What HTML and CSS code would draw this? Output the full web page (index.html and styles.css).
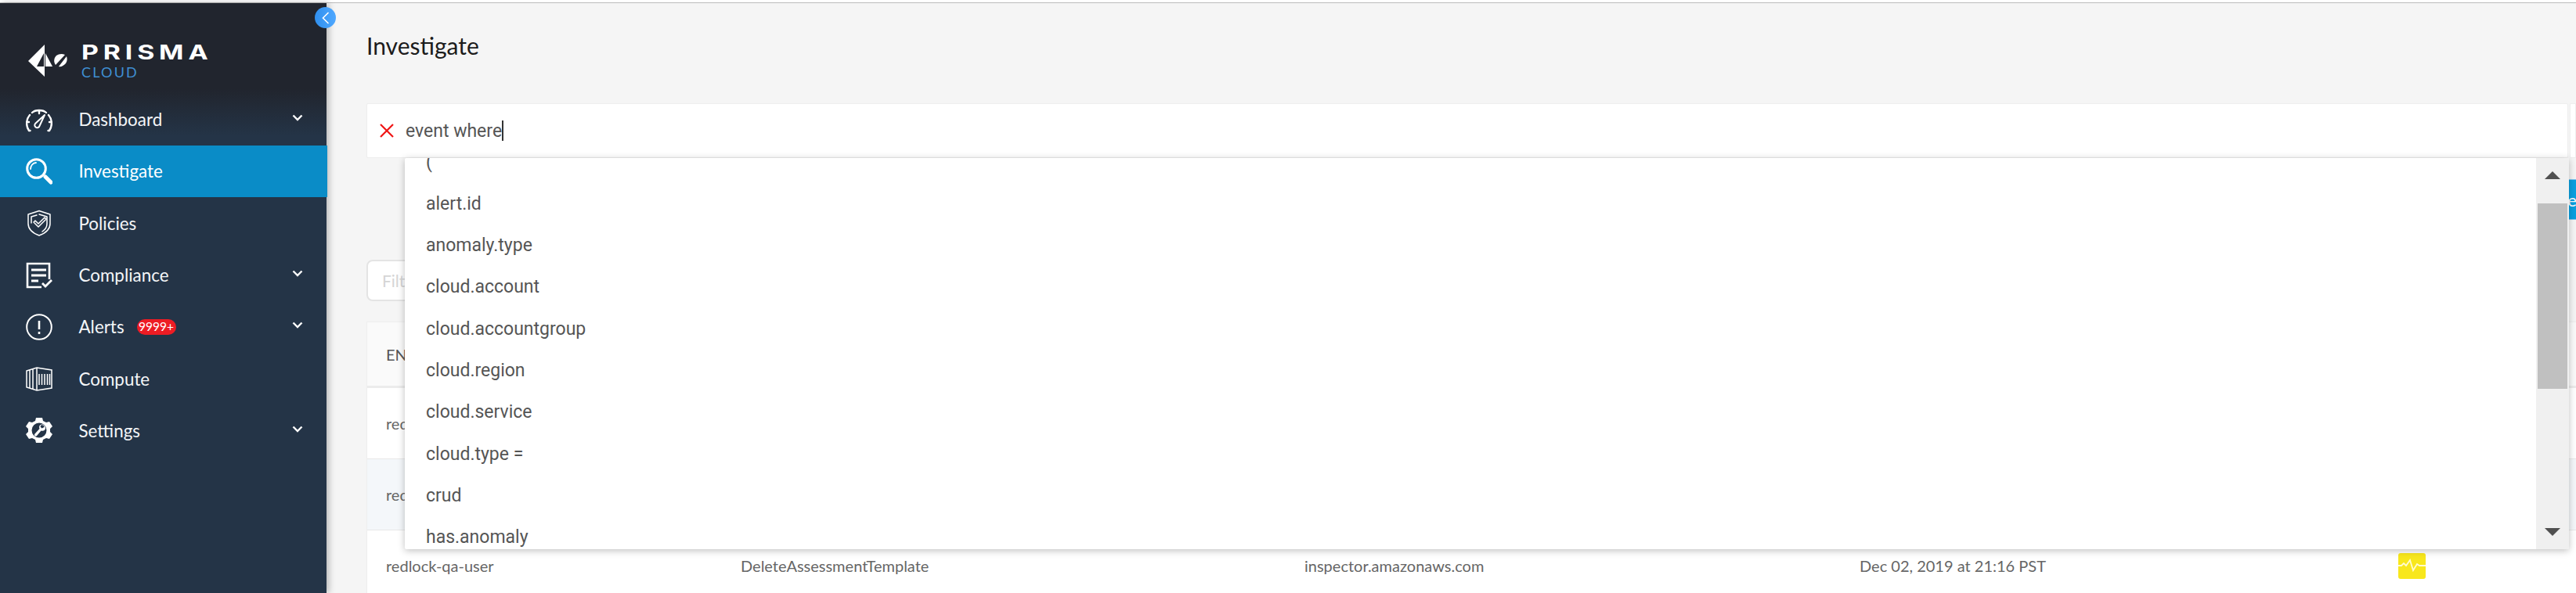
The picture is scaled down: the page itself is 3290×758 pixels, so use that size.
FILE: index.html
```html
<!DOCTYPE html>
<html lang="en">
<head>
    <meta charset="UTF-8">
    <title>Prisma Cloud - Investigate</title>
    <link rel="stylesheet" href="styles.css">
</head>
<body>
    <div class="app">
        <aside class="sidebar">
            <button class="collapse" type="button">
                <svg width="10" height="16" viewBox="0 0 10 16"><path d="M8.5 1 1.5 8l7 7" fill="none" stroke="#fff" stroke-width="1.6"/></svg>
            </button>
            <div class="logo">
                <svg class="logo-mark" width="54" height="46" viewBox="0 0 54 46">
                    <path fill="#fff" fill-rule="evenodd" d="M22 0 1 21l21 20ZM21 11 12 28h9Z"/>
                    <path fill="#fff" d="M23 11v17h9Z"/>
                    <path fill="#fff" d="M36 26c-3-4-2-9 1-12 3-2 7-3 11-1Z"/>
                    <path fill="#fff" d="M50 15c1 3 1 6-1 9-3 3-6 5-9 4Z"/>
                </svg>
                <div class="logo-text">
                    <div class="logo-name">PRISMA</div>
                    <div class="logo-sub">CLOUD</div>
                </div>
            </div>
            <nav class="nav">
                <a class="nav-item">
                    <svg class="nav-icon" width="34" height="34" viewBox="0 0 34 34" fill="none" stroke="#fff" stroke-width="2.4" stroke-linecap="round">
                        <path d="M4 31C0 25 0 17 5 11M8 8c2-2 5-3 9-3s7 1 9 3M29 11c5 6 5 14 1 20M17 5v4M4 20H1M33 20h-3M4 31h1.500M30 31h-1.500"/>
                        <path d="M24 11 12 22a3 3 0 0 0 5 4Z" stroke-width="2" stroke-linejoin="round"/>
                    </svg>
                    <span class="nav-label">Dashboard</span>
                    <svg class="chevron" width="14" height="9" viewBox="0 0 14 9"><path d="m1.5 1.5 5.5 5.5 5.5-5.5" fill="none" stroke="#fff" stroke-width="2.4"/></svg>
                </a>
                <a class="nav-item active">
                    <svg class="nav-icon" width="34" height="34" viewBox="0 0 34 34" fill="none" stroke="#fff" stroke-linecap="round">
                        <circle cx="13.500" cy="13.500" r="11.800" stroke-width="3"/>
                        <path d="M6 14c0-4 3-8 7-8" stroke-width="1.800"/>
                        <path d="m25 24 7 7" stroke-width="5"/>
                    </svg>
                    <span class="nav-label">Investigate</span>
                </a>
                <a class="nav-item">
                    <svg class="nav-icon" width="34" height="34" viewBox="0 0 34 34" fill="none" stroke="#fff" stroke-width="1.500" stroke-linecap="round" stroke-linejoin="round">
                        <path d="M17 1.500 31 6v12c0 7-6 12-14 15C9 30 3 25 3 18V6Z"/>
                        <path d="M17 6 27 9v9c0 5-3 8-6 10M7 17V9l7-2"/>
                        <path d="m10 16 6 6 10-10-2-2-8 8-4-4Z"/>
                    </svg>
                    <span class="nav-label">Policies</span>
                </a>
                <a class="nav-item">
                    <svg class="nav-icon" width="34" height="34" viewBox="0 0 34 34" fill="none" stroke="#fff" stroke-width="2.600">
                        <path d="M20 32H2V2h28v20"/>
                        <path d="M7 10h19M7 17h19M7 24h9" stroke-width="3"/>
                        <path d="m21 27 4 4 8-8" stroke-width="2.800"/>
                    </svg>
                    <span class="nav-label">Compliance</span>
                    <svg class="chevron" width="14" height="9" viewBox="0 0 14 9"><path d="m1.5 1.5 5.5 5.5 5.5-5.5" fill="none" stroke="#fff" stroke-width="2.4"/></svg>
                </a>
                <a class="nav-item">
                    <svg class="nav-icon" width="34" height="34" viewBox="0 0 34 34" fill="none" stroke="#fff" stroke-width="2">
                        <circle cx="17" cy="17" r="15.800"/>
                        <path d="M17 9v11M17 23v3" stroke-width="2.600"/>
                    </svg>
                    <span class="nav-label">Alerts</span>
                    <span class="badge">9999+</span>
                    <svg class="chevron" width="14" height="9" viewBox="0 0 14 9"><path d="m1.5 1.5 5.5 5.5 5.5-5.5" fill="none" stroke="#fff" stroke-width="2.4"/></svg>
                </a>
                <a class="nav-item">
                    <svg class="nav-icon" width="34" height="34" viewBox="0 0 34 34" fill="none" stroke="#fff" stroke-width="1.500">
                        <path d="M1 7 14 3l19 3v23l-19 3-13-4Z"/>
                        <path d="M5 6v23M9 5v25M14 3v29M17 11v14M20.500 11v14M24 11v14M27.500 11v14M30.500 11v14"/>
                    </svg>
                    <span class="nav-label">Compute</span>
                </a>
                <a class="nav-item">
                    <svg class="nav-icon" width="34" height="34" viewBox="0 0 34 34">
                        <path fill="#fff" fill-rule="evenodd" d="M13 1h8l1 4 4 2 4-1 4 6-3 3v4l3 3-4 6-4-1-4 2-1 4h-8l-1-4-4-2-4 1-4-6 3-3v-4L0 12l4-6 4 1 4-2ZM17 7.500a9.500 9.500 0 1 0 0 19 9.500 9.500 0 0 0 0-19Z"/>
                        <path fill="#fff" d="M20 9.500c3 0 5 2 5 5 0 2.500-3 4-5.500 3L14 24c-1 1.500-3.500 0-3-1.500 0-.5.500-1 1-1.500l5.500-6c-1-2.500 0-5 2.500-5.500l-1.500 3 2 2 3-1.500c0-2-1.500-3-3.500-2.500Z"/>
                    </svg>
                    <span class="nav-label">Settings</span>
                    <svg class="chevron" width="14" height="9" viewBox="0 0 14 9"><path d="m1.5 1.5 5.5 5.5 5.5-5.5" fill="none" stroke="#fff" stroke-width="2.4"/></svg>
                </a>
            </nav>
        </aside>

        <main class="main">
            <h1 class="page-title">Investigate</h1>

            <div class="search-row">
                <div class="search-box">
                    <svg class="search-x" width="18" height="18" viewBox="0 0 18 18"><path d="m1 1 16 16M17 1 1 17" stroke="#f01414" stroke-width="2.2"/></svg>
                    <span class="search-text">event where</span><span class="caret"></span>
                </div>
                <div class="search-side"></div>
            </div>

            <div class="actions">
                <button class="btn-primary" type="button">Save</button>
            </div>

            <input class="filter" type="text" placeholder="Filter Results">

            <div class="table">
                <div class="table-row table-head">
                    <div>ENTITY</div><div>EVENT NAME</div><div>SERVICE</div><div>TIME</div><div>ANOMALY</div>
                </div>
                <div class="table-row">
                    <div>redlock-qa-user</div><div>DeleteAssessmentTemplate</div><div>inspector.amazonaws.com</div><div>Dec 02, 2019 at 21:17 PST</div><div></div>
                </div>
                <div class="table-row alt">
                    <div>redlock-qa-user</div><div>DeleteAssessmentTemplate</div><div>inspector.amazonaws.com</div><div>Dec 02, 2019 at 21:17 PST</div><div></div>
                </div>
                <div class="table-row">
                    <div>redlock-qa-user</div><div>DeleteAssessmentTemplate</div><div>inspector.amazonaws.com</div><div>Dec 02, 2019 at 21:16 PST</div>
                    <div>
                        <span class="pulse">
                            <svg width="35" height="33" viewBox="0 0 35 33"><path d="M0 16h4l3-3 3 3 5-7 4 13 5-8 3 2h8" fill="none" stroke="#fffbd0" stroke-width="1.800"/></svg>
                        </span>
                    </div>
                </div>
            </div>

            <div class="suggest">
                <ul class="suggest-list">
                    <li>(</li>
                    <li>alert.id</li>
                    <li>anomaly.type</li>
                    <li>cloud.account</li>
                    <li>cloud.accountgroup</li>
                    <li>cloud.region</li>
                    <li>cloud.service</li>
                    <li>cloud.type =</li>
                    <li>crud</li>
                    <li>has.anomaly</li>
                </ul>
                <div class="scrollbar">
                    <span class="arrow-up"></span>
                    <span class="thumb"></span>
                    <span class="arrow-down"></span>
                </div>
            </div>
        </main>
    </div>
</body>
</html>
```

FILE: styles.css
```css
* {
    box-sizing: border-box;
}
html, body {
    height: 100%;
}
body {
    margin: 0;
    padding-top: 3px;
    overflow: hidden;
    background: #fff;
    font-family: Lato, sans-serif;
}
.app {
    display: flex;
    height: 755px;
    border-top: 1px solid #bbb;
}
.sidebar {
    position: relative;
    z-index: 2;
    flex: 0 0 417px;
    background: linear-gradient(#21252e 0, #21252e 110px, #243447 170px);
    box-shadow: 3px 0 8px rgba(0, 0, 0, 0.25);
}
.collapse {
    position: absolute;
    top: 5px;
    right: -12px;
    width: 27px;
    height: 27px;
    display: flex;
    align-items: center;
    justify-content: center;
    padding: 0;
    border: none;
    border-radius: 50%;
    background: linear-gradient(90deg, #2f8fee, #4fa8ff);
}
.logo {
    display: flex;
    height: 115.5px;
    padding: 53px 0 0 35px;
}
.logo-mark {
    flex: none;
    margin-right: 15px;
}
.logo-text {
    margin-top: -3px;
}
.logo-name {
    color: #fff;
    font: 700 26px/25px Inter, sans-serif;
    letter-spacing: 4.5px;
    transform: scaleX(1.3);
    transform-origin: 0 0;
}
.logo-sub {
    margin-top: 4px;
    color: #3f8fd2;
    font-size: 18px;
    line-height: 19px;
    letter-spacing: 2.2px;
}
.nav-item {
    display: flex;
    align-items: center;
    height: 66.3px;
    padding-left: 33px;
    color: #f4f6f8;
}
.nav-item.active {
    background: #0a8cc7;
    margin-right: -1px;
    color: #fff;
}
.nav-icon {
    flex: none;
    margin-right: 33.5px;
}
.nav-label {
    font-size: 22.4px;
}
.chevron {
    margin-left: auto;
    margin-right: 30px;
    margin-bottom: 4px;
}
.badge {
    margin-left: 16px;
    height: 20px;
    width: 50px;
    border-radius: 10px;
    background: #ed1c24;
    color: #fff;
    font-size: 15.5px;
    line-height: 18px;
    text-align: center;
}
.main {
    position: relative;
    flex: 1;
    min-width: 0;
    padding-left: 51px;
    background: #f5f5f5;
    overflow: hidden;
}
.page-title {
    height: 128px;
    margin: 0;
    padding-top: 36px;
    color: #1c1c1c;
    font-size: 30px;
    font-weight: 400;
    line-height: 36px;
}
.search-row {
    display: flex;
    gap: 2px;
    height: 70px;
}
.search-box {
    flex: 1;
    display: flex;
    align-items: center;
    padding-left: 16px;
    background: #fff;
    border: 1px solid #eee;
    border-radius: 2px;
}
.search-side {
    flex: 0 0 8px;
    background: #fff;
    border: 1px solid #eee;
}
.search-x {
    margin-right: 15px;
}
.search-text {
    color: #555;
    font: 23px Roboto, sans-serif;
}
.caret {
    width: 2px;
    height: 26px;
    background: #333;
}
.actions {
    height: 130px;
    padding-top: 27px;
    display: flex;
    justify-content: flex-end;
}
.btn-primary {
    width: 130px;
    height: 52px;
    margin-right: -1px;
    padding: 0;
    border: none;
    border-top: 1px solid #7cc4ef;
    border-bottom: 1px solid #7cc4ef;
    background: #0aa0e0;
    color: #fff;
    font: 22px Lato, sans-serif;
    text-align: right;
}
.filter {
    display: block;
    width: 560px;
    height: 53px;
    margin-bottom: 26px;
    padding: 0 18px;
    border: 2px solid #e4e4e4;
    border-radius: 8px;
    background: #fff;
    font: 21px Lato, sans-serif;
}
.filter::placeholder {
    color: #d5d5d5;
}
.table {
    background: #fff;
    border-left: 1px solid #eee;
    border-top: 1px solid #eee;
}
.table-row {
    display: grid;
    grid-template-columns: 453px 720px 709px 688px 1fr;
    align-items: center;
    height: 91px;
    padding-left: 24px;
    border-bottom: 1px solid #e8e8e8;
    color: #666;
    font-size: 20px;
}
.table-head {
    height: 84px;
    background: #fafafa;
    border-bottom: 3px solid #ececec;
    color: #555;
}
.alt {
    background: #f4f7fa;
}
.pulse {
    display: block;
    width: 35px;
    height: 33px;
    border-radius: 3px;
    background: #f8e71c;
}
.suggest {
    position: absolute;
    top: 198px;
    left: 100px;
    width: 2764px;
    height: 500px;
    display: flex;
    background: #fff;
    border-radius: 2px;
    box-shadow: 0 2px 10px rgba(0, 0, 0, 0.25);
    overflow: hidden;
}
.suggest-list {
    flex: 1;
    margin: -21.5px 0 0;
    padding: 0 0 0 27px;
    list-style: none;
    color: #555;
    font: 23px/53.3px Roboto, sans-serif;
}
.scrollbar {
    position: relative;
    flex: 0 0 42px;
    background: #f0f0f0;
}
.thumb {
    position: absolute;
    top: 58px;
    left: 2px;
    width: 38px;
    height: 237px;
    background: #c0c0c0;
}
.arrow-up, .arrow-down {
    position: absolute;
    left: 11px;
    border-left: 10px solid transparent;
    border-right: 10px solid transparent;
}
.arrow-up {
    top: 17px;
    border-bottom: 10px solid #505050;
}
.arrow-down {
    bottom: 17px;
    border-top: 10px solid #505050;
}
```
